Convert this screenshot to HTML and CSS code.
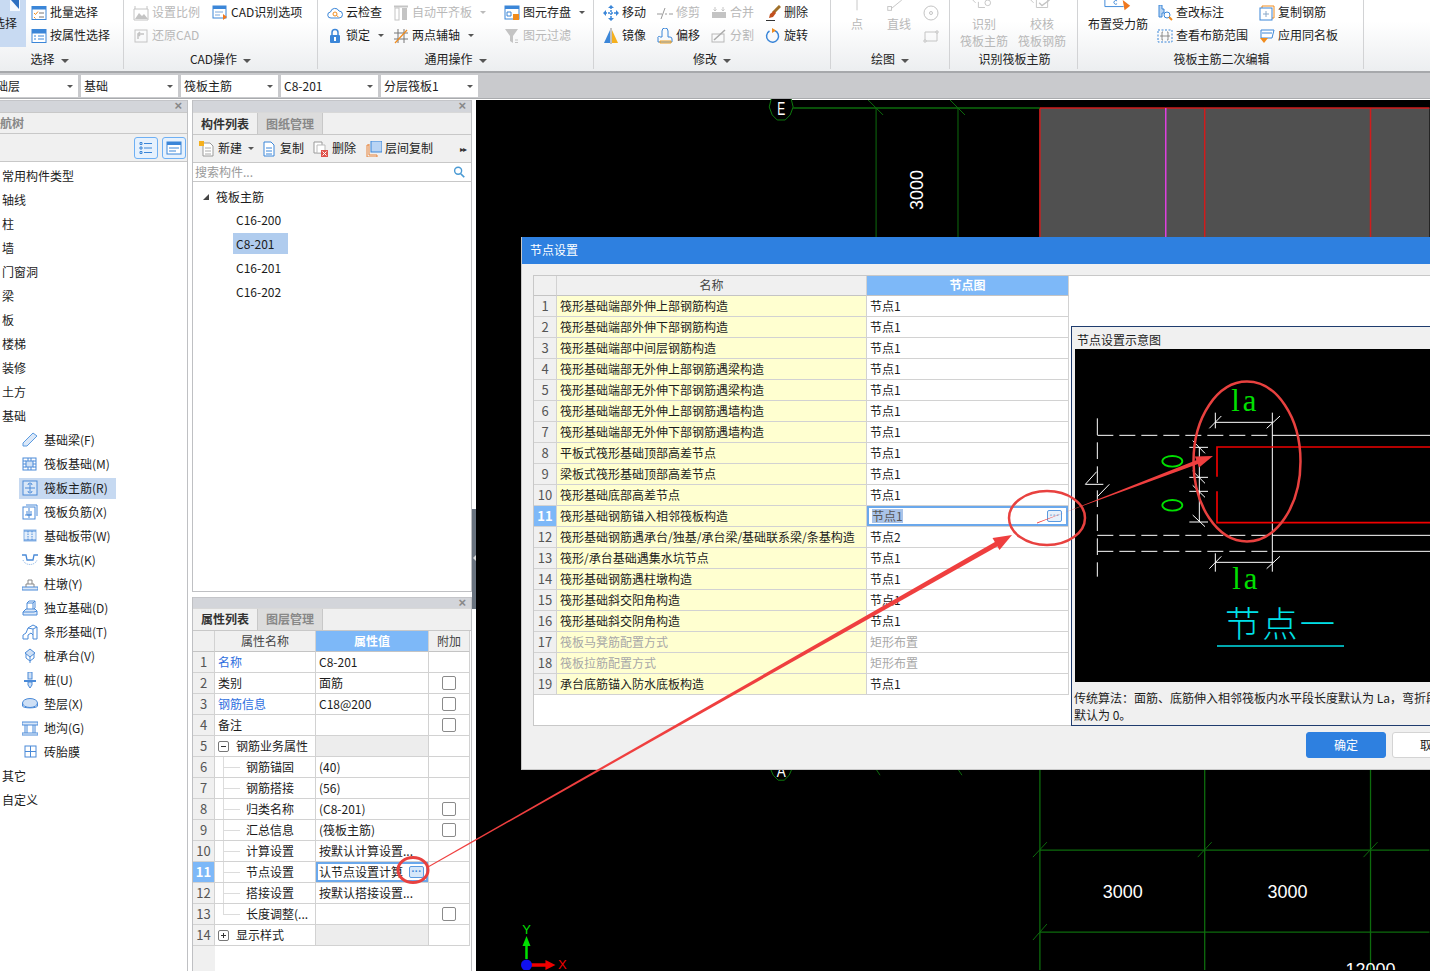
FILE: index.html
```html
<!DOCTYPE html>
<html lang="zh">
<head>
<meta charset="utf-8">
<title>节点设置</title>
<link rel="stylesheet" href="styles.css">
</head>
<body>
<svg class="defs" xmlns="http://www.w3.org/2000/svg">
  <symbol id="r-batch" viewBox="0 0 16 16"><rect x="1" y="1.5" width="14" height="13" fill="#fff" stroke="#3b86d8"/><rect x="1" y="1.5" width="14" height="3" fill="#3b86d8"/><path d="M3 8l1.5 1.5L7 6.5M3 12l1.5 1.5" fill="none" stroke="#f08c1e"/><path d="M8 8h5M8 12h5" stroke="#777"/></symbol>
  <symbol id="r-attr" viewBox="0 0 16 16"><rect x="1" y="1.5" width="14" height="13" fill="#fff" stroke="#3b86d8"/><rect x="1" y="1.5" width="14" height="4" fill="#3b86d8"/><path d="M3 8h2M7 8h6M3 11h2M7 11h6" stroke="#3b86d8"/></symbol>
  <symbol id="r-scale" viewBox="0 0 16 16"><path d="M1 4h14v11H1z" fill="none" stroke="#c4c4c4"/><path d="M2 14l4-6 3 3 2-2 4 5z" fill="#c4c4c4"/><path d="M2 1v3M14 1v3" stroke="#c4c4c4"/></symbol>
  <symbol id="r-cad" viewBox="0 0 16 16"><rect x="1" y="1" width="13" height="12" fill="#fff" stroke="#3b86d8"/><rect x="1" y="1" width="13" height="3" fill="#3b86d8"/><path d="M3 7h8M3 10h5" stroke="#7aa8dc"/><path d="M11 9l4 3-4 3z" fill="#f0781e"/></symbol>
  <symbol id="r-restore" viewBox="0 0 16 16"><rect x="2" y="2" width="12" height="12" fill="none" stroke="#c4c4c4"/><path d="M5 11V6h6M7 4L5 6l2 2" fill="none" stroke="#c4c4c4" stroke-width="1.5"/></symbol>
  <symbol id="r-cloud" viewBox="0 0 16 16"><path d="M4 13a3 3 0 0 1-.5-6A4.5 4.5 0 0 1 12 6a3.5 3.5 0 0 1 0 7z" fill="#fff" stroke="#3b86d8"/><circle cx="8" cy="9" r="2" fill="none" stroke="#f08c1e"/><path d="M9.5 10.5l2 1.5" stroke="#f08c1e"/></symbol>
  <symbol id="r-lock" viewBox="0 0 16 16"><path d="M5 7V4.5a3 3 0 0 1 6 0V7" fill="none" stroke="#3b86d8" stroke-width="1.5"/><rect x="3" y="7" width="10" height="8" rx="1" fill="#3b86d8"/><rect x="7" y="9" width="2" height="4" fill="#fff"/></symbol>
  <symbol id="r-align" viewBox="0 0 16 16"><path d="M1 1.500h14" stroke="#c4c4c4" stroke-width="2"/><rect x="2" y="3" width="4" height="12" fill="none" stroke="#c4c4c4"/><rect x="9" y="3" width="5" height="12" fill="#c4c4c4"/></symbol>
  <symbol id="r-axis" viewBox="0 0 16 16"><path d="M1 5h14M1 11h14M5 1v14M11 1v14" stroke="#777"/><path d="M2 15L14 2" stroke="#f08c1e" stroke-width="1.2"/></symbol>
  <symbol id="r-save" viewBox="0 0 16 16"><rect x="1" y="1" width="14" height="13" fill="#fff" stroke="#3b86d8"/><rect x="1" y="1" width="14" height="3" fill="#3b86d8"/><path d="M3 7h4v4H3z" fill="none" stroke="#3b86d8"/><rect x="9" y="9" width="6" height="6" fill="#f08c1e"/></symbol>
  <symbol id="r-filter" viewBox="0 0 16 16"><path d="M1 1h13L9 8v7L6 13V8z" fill="#c4c4c4"/><path d="M11 12h3M11 14.500h3" stroke="#c4c4c4"/></symbol>
  <symbol id="r-move" viewBox="0 0 16 16"><path d="M8 2v12M2 8h12" stroke="#3b86d8" stroke-width="1.5" stroke-dasharray="2 1"/><path d="M8 0l3 3H5zM8 16l-3-3h6zM0 8l3-3v6zM16 8l-3 3V5z" fill="#3b86d8"/></symbol>
  <symbol id="r-trim" viewBox="0 0 16 16"><path d="M0 9h5M8 9h2M12 9h4" stroke="#999"/><path d="M4 14L8 3" stroke="#999"/></symbol>
  <symbol id="r-merge" viewBox="0 0 16 16"><rect x="1" y="7" width="14" height="6" fill="#c4c4c4"/><path d="M4 2v4M2.500 4.500L4 6l1.500-1.500M12 2v4M10.500 4.500L12 6l1.500-1.500" fill="none" stroke="#c4c4c4"/></symbol>
  <symbol id="r-del" viewBox="0 0 16 16"><path d="M15 1L8 8" stroke="#a0702a" stroke-width="3"/><path d="M9 6l2 2-3 4-4 1 1-4z" fill="#c2501e"/><path d="M1 15.500h9" stroke="#333"/></symbol>
  <symbol id="r-mirror" viewBox="0 0 16 16"><path d="M7 2v13H1z" fill="#3b86d8"/><path d="M9 2v13h6z" fill="#f5b01e"/><path d="M8 0v16" stroke="#888"/></symbol>
  <symbol id="r-offset" viewBox="0 0 16 16"><path d="M1 14v-4a1 1 0 0 1 2-1h2V3a2 2 0 0 1 6 0v6h2a2 2 0 0 1 2 2v3z" fill="none" stroke="#3b86d8"/><path d="M3 15h11v-2H3z" fill="none" stroke="#f0a01e"/></symbol>
  <symbol id="r-split" viewBox="0 0 16 16"><rect x="1" y="6" width="12" height="8" fill="none" stroke="#b8b8b8"/><path d="M3 12L14 2" stroke="#aaa" stroke-width="1.500"/></symbol>
  <symbol id="r-rotate" viewBox="0 0 16 16"><path d="M4.500 3a6 6 0 1 0 5-.500" fill="none" stroke="#3b86d8" stroke-width="1.500"/><path d="M7 0l4 2.500L7 5z" fill="#f08c1e"/></symbol>
  <symbol id="r-circle" viewBox="0 0 16 16"><circle cx="8" cy="8" r="7" fill="none" stroke="#c4c4c4"/><circle cx="8" cy="8" r="1.500" fill="none" stroke="#c4c4c4"/></symbol>
  <symbol id="r-rect" viewBox="0 0 16 16"><path d="M2 4h12v9H2z" fill="none" stroke="#c4c4c4"/><path d="M1 12h2v2H1zM13 3h2v2h-2z" fill="#fff" stroke="#c4c4c4"/></symbol>
  <symbol id="r-point" viewBox="0 0 30 16"><path d="M15 0v11" stroke="#c4c4c4"/></symbol>
  <symbol id="r-line" viewBox="0 0 30 16"><path d="M7 9l11-9" stroke="#c4c4c4"/><rect x="3" y="7" width="4" height="4" fill="none" stroke="#c4c4c4"/></symbol>
  <symbol id="r-rec1" viewBox="0 0 30 16"><path d="M9 2v6h7" fill="none" stroke="#c4c4c4"/><circle cx="19" cy="3" r="3" fill="none" stroke="#c4c4c4"/><path d="M3 0l3 3" stroke="#c4c4c4"/></symbol>
  <symbol id="r-rec2" viewBox="0 0 30 16"><path d="M9 0v8h12V0" fill="none" stroke="#c4c4c4"/><path d="M12 3l3 3 8-6" fill="none" stroke="#c4c4c4" stroke-width="1.500"/><path d="M3 0l3 3" stroke="#c4c4c4"/></symbol>
  <symbol id="r-place" viewBox="0 0 30 16"><path d="M1 0v7h20" fill="none" stroke="#3b86d8"/><path d="M14 1a2 2 0 1 0 0 3" fill="none" stroke="#3b86d8"/><path d="M20 0l8 6-6 5z" fill="#f0781e"/></symbol>
  <symbol id="r-check" viewBox="0 0 16 16"><path d="M2 0h3v4h2v4H5v4H2z" fill="#bcd6f2" stroke="#3b86d8"/><circle cx="10" cy="10" r="3" fill="#fff" stroke="#3b86d8"/><path d="M12 12l3 3" stroke="#f08c1e" stroke-width="2"/></symbol>
  <symbol id="r-range" viewBox="0 0 16 16"><rect x="1" y="2" width="14" height="12" fill="none" stroke="#3b86d8" stroke-dasharray="2 1.500"/><path d="M6 4H5v8h1M10 4h1v8h-1M3 8h10" fill="none" stroke="#777" stroke-width=".8"/></symbol>
  <symbol id="r-copy" viewBox="0 0 16 16"><path d="M3 3V1h12v12h-2" fill="none" stroke="#f08c1e"/><rect x="1" y="3" width="12" height="12" fill="#fff" stroke="#3b86d8"/><path d="M4 9h6M7 6v6" stroke="#8aa8c8"/></symbol>
  <symbol id="r-same" viewBox="0 0 16 16"><path d="M2 2h13l-2 8H2z" fill="#fff" stroke="#3b86d8"/><path d="M1 10h8l-4 5z" fill="#f08c1e"/><path d="M3 5h10" stroke="#3b86d8"/></symbol>

  <symbol id="t-new" viewBox="0 0 16 16"><path d="M4 2h7l3 3v10H4z" fill="#fff" stroke="#999"/><path d="M6 7h6M6 10h6M6 13h6" stroke="#aaa"/><rect x="0" y="0" width="5" height="5" fill="#f5b01e"/></symbol>
  <symbol id="t-copy" viewBox="0 0 16 16"><path d="M3 1h7l3 3v11H3z" fill="#fff" stroke="#3b86d8"/><path d="M5 7h6M5 10h6M5 13h6" stroke="#3b86d8"/></symbol>
  <symbol id="t-del" viewBox="0 0 16 16"><path d="M1 1h8v11H1z" fill="#fff" stroke="#999"/><path d="M4 4h8v8H4z" fill="#fff" stroke="#bbb"/><rect x="8" y="9" width="7" height="7" fill="#e0524a"/><path d="M9.500 10.500l4 4M13.500 10.500l-4 4" stroke="#fff"/></symbol>
  <symbol id="t-floor" viewBox="0 0 16 16"><rect x="5" y="0" width="11" height="11" fill="#b8d4f4" stroke="#3b86d8"/><path d="M3 4H1v12h10v-2M3 3v11h8" fill="none" stroke="#e8843a"/></symbol>
  <symbol id="t-search" viewBox="0 0 16 16"><circle cx="7" cy="6.500" r="4" fill="none" stroke="#4a9ad4" stroke-width="1.600"/><path d="M10 10l4 4" stroke="#4a9ad4" stroke-width="2"/></symbol>
  <symbol id="t-list" viewBox="0 0 16 16"><path d="M2 2.500h2v2H2zM2 7h2v2H2zM2 11.500h2v2H2z" fill="none" stroke="#3b86d8"/><path d="M6 3.500h8M6 8h8M6 12.500h8" stroke="#3b86d8"/></symbol>
  <symbol id="t-win" viewBox="0 0 16 16"><rect x="1" y="2" width="14" height="12" fill="#fff" stroke="#3b86d8"/><rect x="1" y="2" width="14" height="3" fill="#3b86d8"/><path d="M3 8h10M3 11h7" stroke="#3b86d8"/></symbol>

  <symbol id="n-beam" viewBox="0 0 16 16"><path d="M1 11L11 1l4 3L5 14H1z" fill="#dbe8f8" stroke="#5a9ae0"/></symbol>
  <symbol id="n-raft" viewBox="0 0 16 16"><rect x="1" y="2" width="13" height="12" fill="#fff" stroke="#4a8ad8"/><rect x="4" y="5" width="7" height="6" fill="#cfe0f5" stroke="#4a8ad8"/><path d="M1 5h3M1 8h3M1 11h3M11 5h3M11 8h3M11 11h3M6 2v3M9 2v3M6 11v3M9 11v3" stroke="#4a8ad8"/></symbol>
  <symbol id="n-main" viewBox="0 0 16 16"><rect x="1" y="1" width="14" height="14" fill="#d8e6f7" stroke="#4a8ad8"/><path d="M3 8h10M8 4v8" stroke="#4a8ad8"/><path d="M6 5a2 2 0 0 1 4 0M6 11a2 2 0 0 0 4 0" fill="none" stroke="#4a8ad8"/></symbol>
  <symbol id="n-neg" viewBox="0 0 16 16"><path d="M4 1h11v11" fill="none" stroke="#4a8ad8"/><rect x="1" y="3" width="12" height="12" fill="#fff" stroke="#4a8ad8"/><path d="M7 4v10M5 7v4h4V7M3 11h7" fill="none" stroke="#4a8ad8"/></symbol>
  <symbol id="n-band" viewBox="0 0 16 16"><rect x="2" y="2" width="12" height="11" fill="#e3eefb" stroke="#8ab4e6"/><path d="M2 3h12M2 12h12" stroke="#4a8ad8"/><path d="M6 3v9M10 3v9" stroke="#4a8ad8" stroke-dasharray="1.500 1"/></symbol>
  <symbol id="n-pit" viewBox="0 0 16 16"><path d="M0 3h4l1 5h6l1-5h4" fill="none" stroke="#4a8ad8" stroke-width="1.300"/><path d="M1 8c2 6 12 6 14 0" fill="none" stroke="#8ab4e6" stroke-dasharray="1 1"/></symbol>
  <symbol id="n-pier" viewBox="0 0 16 16"><path d="M0 11h16v3H0z" fill="#dbe8f8" stroke="#4a8ad8"/><path d="M4 11V8h8v3M6 8V4h4v4" fill="none" stroke="#888"/></symbol>
  <symbol id="n-ind" viewBox="0 0 16 16"><path d="M5 9V3l2-2h6v7l-2 2" fill="#fff" stroke="#4a8ad8"/><path d="M5 3h6v6M11 3l2-2" fill="none" stroke="#4a8ad8"/><path d="M1 15v-3l3-3h9l2 2v4z" fill="#dbe8f8" stroke="#4a8ad8"/><path d="M1 12h11l3-1" fill="none" stroke="#4a8ad8"/></symbol>
  <symbol id="n-strip" viewBox="0 0 16 16"><path d="M1 15v-4l3-2 2-5 5-3 4 2v12h-4v-4l-2-2-3 2v4z" fill="#fff" stroke="#4a8ad8"/><path d="M6 4l5 1 4-2M11 5v6" fill="none" stroke="#4a8ad8"/></symbol>
  <symbol id="n-cap" viewBox="0 0 16 16"><path d="M8 1l5 4-5 4-5-4z" fill="#cfe0f5" stroke="#4a8ad8"/><path d="M4 6v4l4 3 4-3V6M8 9v6" fill="none" stroke="#4a8ad8"/></symbol>
  <symbol id="n-pile" viewBox="0 0 16 16"><rect x="6" y="0" width="4" height="7" fill="#cfe0f5" stroke="#4a8ad8"/><path d="M2 8h12v2H2z" fill="#4a8ad8"/><path d="M6 10h4v3l-2 3-2-3z" fill="#cfe0f5" stroke="#4a8ad8"/></symbol>
  <symbol id="n-cush" viewBox="0 0 16 16"><ellipse cx="8" cy="7" rx="7.500" ry="4.500" fill="#cfe0f5" stroke="#4a8ad8"/><path d="M.5 7v3c0 2.500 15 2.500 15 0V7" fill="none" stroke="#4a8ad8"/></symbol>
  <symbol id="n-ditch" viewBox="0 0 16 16"><path d="M0 2h16v3H0z" fill="#dbe8f8" stroke="#4a8ad8"/><path d="M3 5v8M13 5v8M5 5v8M11 5v8" stroke="#4a8ad8"/><path d="M0 13h16v2H0z" fill="#fff" stroke="#4a8ad8"/></symbol>
  <symbol id="n-brick" viewBox="0 0 16 16"><rect x="3" y="2" width="11" height="11" fill="#fff" stroke="#4a8ad8"/><path d="M8.500 2v11M3 7.500h11" stroke="#4a8ad8"/></symbol>
</svg>

<header class="ribbon">
  <section class="grp g1">
    <div class="body">
      <div class="bigbtn"><svg class="bigbtn-mark" viewBox="0 0 10 11"><path d="M0 0h10v11H0z" fill="#f4f8fd"/><path d="M1 0l8 9V0z" fill="#2c6fc0"/></svg><span class="bigbtn-txt">选择</span></div>
      <div class="col">
        <div class="it"><svg class="ic"><use href="#r-batch"/></svg>批量选择</div>
        <div class="it"><svg class="ic"><use href="#r-attr"/></svg>按属性选择</div>
      </div>
    </div>
    <div class="lab">选择<i class="car"></i></div>
  </section>
  <section class="grp g2">
    <div class="body">
      <div class="col">
        <div class="it off"><svg class="ic"><use href="#r-scale"/></svg>设置比例</div>
        <div class="it off"><svg class="ic"><use href="#r-restore"/></svg>还原CAD</div>
      </div>
      <div class="col">
        <div class="it"><svg class="ic"><use href="#r-cad"/></svg>CAD识别选项</div>
      </div>
    </div>
    <div class="lab">CAD操作<i class="car"></i></div>
  </section>
  <section class="grp g3">
    <div class="body">
      <div class="col">
        <div class="it"><svg class="ic"><use href="#r-cloud"/></svg>云检查</div>
        <div class="it"><svg class="ic"><use href="#r-lock"/></svg>锁定<i class="car sm"></i></div>
      </div>
      <div class="col">
        <div class="it off"><svg class="ic"><use href="#r-align"/></svg>自动平齐板<i class="car sm dim"></i></div>
        <div class="it"><svg class="ic"><use href="#r-axis"/></svg>两点辅轴<i class="car sm"></i></div>
      </div>
      <div class="col">
        <div class="it"><svg class="ic"><use href="#r-save"/></svg>图元存盘<i class="car sm"></i></div>
        <div class="it off"><svg class="ic"><use href="#r-filter"/></svg>图元过滤</div>
      </div>
    </div>
    <div class="lab">通用操作<i class="car"></i></div>
  </section>
  <section class="grp g4">
    <div class="body">
      <div class="col">
        <div class="it"><svg class="ic"><use href="#r-move"/></svg>移动</div>
        <div class="it"><svg class="ic"><use href="#r-mirror"/></svg>镜像</div>
      </div>
      <div class="col">
        <div class="it off"><svg class="ic"><use href="#r-trim"/></svg>修剪</div>
        <div class="it"><svg class="ic"><use href="#r-offset"/></svg>偏移</div>
      </div>
      <div class="col">
        <div class="it off"><svg class="ic"><use href="#r-merge"/></svg>合并</div>
        <div class="it off"><svg class="ic"><use href="#r-split"/></svg>分割</div>
      </div>
      <div class="col">
        <div class="it"><svg class="ic"><use href="#r-del"/></svg>删除</div>
        <div class="it"><svg class="ic"><use href="#r-rotate"/></svg>旋转</div>
      </div>
    </div>
    <div class="lab">修改<i class="car"></i></div>
  </section>
  <section class="grp g5">
    <div class="body">
      <div class="big off"><svg class="icw"><use href="#r-point"/></svg><span>点</span></div>
      <div class="big off"><svg class="icw"><use href="#r-line"/></svg><span>直线</span></div>
      <div class="col">
        <div class="it"><svg class="ic"><use href="#r-circle"/></svg></div>
        <div class="it"><svg class="ic"><use href="#r-rect"/></svg></div>
      </div>
    </div>
    <div class="lab">绘图<i class="car"></i></div>
  </section>
  <section class="grp g6">
    <div class="body">
      <div class="big off"><svg class="icw"><use href="#r-rec1"/></svg><span>识别</span><span>筏板主筋</span></div>
      <div class="big off"><svg class="icw"><use href="#r-rec2"/></svg><span>校核</span><span>筏板钢筋</span></div>
    </div>
    <div class="lab">识别筏板主筋</div>
  </section>
  <section class="grp g7">
    <div class="body">
      <div class="big"><svg class="icw"><use href="#r-place"/></svg><span>布置受力筋</span></div>
      <div class="col">
        <div class="it"><svg class="ic"><use href="#r-check"/></svg>查改标注</div>
        <div class="it"><svg class="ic"><use href="#r-range"/></svg>查看布筋范围</div>
      </div>
      <div class="col">
        <div class="it"><svg class="ic"><use href="#r-copy"/></svg>复制钢筋</div>
        <div class="it"><svg class="ic"><use href="#r-same"/></svg>应用同名板</div>
      </div>
    </div>
    <div class="lab">筏板主筋二次编辑</div>
  </section>
</header>

<div class="combobar">
  <div class="combo first"><span class="clipped">基础层</span><i class="car sm"></i></div>
  <div class="combo"><span>基础</span><i class="car sm"></i></div>
  <div class="combo"><span>筏板主筋</span><i class="car sm"></i></div>
  <div class="combo"><span>C8-201</span><i class="car sm"></i></div>
  <div class="combo"><span>分层筏板1</span><i class="car sm"></i></div>
</div>

<main class="main">
  <aside class="nav">
    <div class="strip"><span class="x">×</span></div>
    <div class="navhead">航树</div>
    <div class="navtool">
      <span class="tbtn"><svg class="ic"><use href="#t-list"/></svg></span>
      <span class="tbtn"><svg class="ic"><use href="#t-win"/></svg></span>
    </div>
    <div class="tree">
      <div class="nr">常用构件类型</div>
      <div class="nr">轴线</div>
      <div class="nr">柱</div>
      <div class="nr">墙</div>
      <div class="nr">门窗洞</div>
      <div class="nr">梁</div>
      <div class="nr">板</div>
      <div class="nr">楼梯</div>
      <div class="nr">装修</div>
      <div class="nr">土方</div>
      <div class="nr">基础</div>
      <div class="nc"><svg class="ic"><use href="#n-beam"/></svg>基础梁(F)</div>
      <div class="nc"><svg class="ic"><use href="#n-raft"/></svg>筏板基础(M)</div>
      <div class="nc sel"><svg class="ic"><use href="#n-main"/></svg>筏板主筋(R)</div>
      <div class="nc"><svg class="ic"><use href="#n-neg"/></svg>筏板负筋(X)</div>
      <div class="nc"><svg class="ic"><use href="#n-band"/></svg>基础板带(W)</div>
      <div class="nc"><svg class="ic"><use href="#n-pit"/></svg>集水坑(K)</div>
      <div class="nc"><svg class="ic"><use href="#n-pier"/></svg>柱墩(Y)</div>
      <div class="nc"><svg class="ic"><use href="#n-ind"/></svg>独立基础(D)</div>
      <div class="nc"><svg class="ic"><use href="#n-strip"/></svg>条形基础(T)</div>
      <div class="nc"><svg class="ic"><use href="#n-cap"/></svg>桩承台(V)</div>
      <div class="nc"><svg class="ic"><use href="#n-pile"/></svg>桩(U)</div>
      <div class="nc"><svg class="ic"><use href="#n-cush"/></svg>垫层(X)</div>
      <div class="nc"><svg class="ic"><use href="#n-ditch"/></svg>地沟(G)</div>
      <div class="nc"><svg class="ic"><use href="#n-brick"/></svg>砖胎膜</div>
      <div class="nr">其它</div>
      <div class="nr">自定义</div>
    </div>
  </aside>

  <div class="midcol">
    <section class="panel top">
      <div class="strip"><span class="x">×</span></div>
      <div class="tabs"><span class="tab on">构件列表</span><span class="tab">图纸管理</span></div>
      <div class="listtool">
        <span class="lt t1"><svg class="ic"><use href="#t-new"/></svg>新建<i class="car sm"></i></span>
        <span class="lt t2"><svg class="ic"><use href="#t-copy"/></svg>复制</span>
        <span class="lt t3"><svg class="ic"><use href="#t-del"/></svg>删除</span>
        <span class="lt t4"><svg class="ic"><use href="#t-floor"/></svg>层间复制</span>
        <span class="more">▸▸</span>
      </div>
      <div class="search"><span>搜索构件...</span><svg class="ic"><use href="#t-search"/></svg></div>
      <div class="list">
        <div class="lr root"><i class="tri"></i>筏板主筋</div>
        <div class="lr leaf"><span>C16-200</span></div>
        <div class="lr leaf"><span class="picked">C8-201</span></div>
        <div class="lr leaf"><span>C16-201</span></div>
        <div class="lr leaf"><span>C16-202</span></div>
      </div>
    </section>

    <section class="panel bottom">
      <div class="strip short"><span class="x">×</span></div>
      <div class="tabs"><span class="tab on">属性列表</span><span class="tab">图层管理</span></div>
      <div class="propwrap">
        <table class="grid prop">
          <colgroup><col class="pc0"><col class="pc1"><col class="pc2"><col class="pc3"></colgroup>
          <thead><tr><th></th><th>属性名称</th><th class="hot">属性值</th><th>附加</th></tr></thead>
          <tbody>
            <tr><td class="no">1</td><td class="link">名称</td><td>C8-201</td><td></td></tr>
            <tr><td class="no">2</td><td>类别</td><td>面筋</td><td class="cc"><i class="chk"></i></td></tr>
            <tr><td class="no">3</td><td class="link">钢筋信息</td><td>C18@200</td><td class="cc"><i class="chk"></i></td></tr>
            <tr><td class="no">4</td><td>备注</td><td></td><td class="cc"><i class="chk"></i></td></tr>
            <tr><td class="no">5</td><td><i class="box"></i>钢筋业务属性</td><td class="shade"></td><td></td></tr>
            <tr><td class="no">6</td><td class="sub">钢筋锚固</td><td>(40)</td><td></td></tr>
            <tr><td class="no">7</td><td class="sub">钢筋搭接</td><td>(56)</td><td></td></tr>
            <tr><td class="no">8</td><td class="sub">归类名称</td><td>(C8-201)</td><td class="cc"><i class="chk"></i></td></tr>
            <tr><td class="no">9</td><td class="sub">汇总信息</td><td>(筏板主筋)</td><td class="cc"><i class="chk"></i></td></tr>
            <tr><td class="no">10</td><td class="sub">计算设置</td><td>按默认计算设置...</td><td></td></tr>
            <tr><td class="no cur">11</td><td class="sub">节点设置</td><td class="edit"><span class="edit-in"><span class="edit-t">认节点设置计算</span><i class="dots">···</i></span></td><td></td></tr>
            <tr><td class="no">12</td><td class="sub">搭接设置</td><td>按默认搭接设置...</td><td></td></tr>
            <tr><td class="no">13</td><td class="sub last">长度调整(...</td><td></td><td class="cc"><i class="chk"></i></td></tr>
            <tr><td class="no">14</td><td><i class="box plus"></i>显示样式</td><td class="shade"></td><td></td></tr>
          </tbody>
        </table>
      </div>
    </section>
  </div>

  <div class="splitter"><span class="handle"></span></div>

  <div class="canvas">
    <svg class="cad" viewBox="476 99 954 872">
      <rect x="1040" y="108" width="390" height="135" fill="#505050"/>
      <path d="M1040 108h390M1040 108v135M1205 108v135M1371 108v135" stroke="#d01c1c" stroke-width="1.500" fill="none"/>
      <path d="M1166 108v135" stroke="#e040e0" stroke-width="1.500"/>
      <path d="M876 108v135M958 108v135M868 100l15 15M950 100l15 15" stroke="#0d6b0d" stroke-width="1" fill="none"/>
      <path d="M793 108h247" stroke="#0d6b0d" stroke-width="1.500"/>
      <path d="M771 99l-2 8 3 8 5 5h8l5-5 3-8-2-8" fill="#000" stroke="#0d7a0d"/>
      <text x="781" y="115" class="cad-t e" textLength="8" lengthAdjust="spacingAndGlyphs">E</text>
      <text x="917" y="190" class="cad-t n3" transform="rotate(-90 917 190)" dy="6">3000</text>
      <path d="M770 769l3 7 5 5h6l5-5 3-7" fill="#000" stroke="#0d7a0d"/>
      <text x="781" y="778" class="cad-t ea" textLength="9" lengthAdjust="spacingAndGlyphs">A</text>
      <path d="M876 770l4 6M958 770l4 6" stroke="#0d6b0d"/>
      <path d="M1040 769v202M1205 769v202M1371 769v202M1040 851h390M1040 933h390" stroke="#0d6b0d" stroke-width="1.300"/>
      <path d="M1033 858l14-15M1198 858l14-15M1364 858l14-15M1033 941l14-16" stroke="#0d6b0d"/>
      <text x="1123" y="899" class="cad-t n3">3000</text>
      <text x="1288" y="899" class="cad-t n3">3000</text>
      <text x="1346" y="977" class="cad-t n4">12000</text>
      <path d="M526 960v-18" stroke="#00e000" stroke-width="2.500"/>
      <path d="M526 937l-4 10h8z" fill="#00e000"/>
      <path d="M526 966h20" stroke="#f00000" stroke-width="3.500"/>
      <path d="M555 966l-10-5v10z" fill="#f00000"/>
      <circle cx="526" cy="966" r="5.500" fill="#1010f0"/>
      <text x="526" y="935" class="cad-t ax gy">Y</text>
      <text x="562" y="970" class="cad-t ax rx">X</text>
    </svg>
  </div>
</main>

<div class="dialog">
  <div class="dtitle">节点设置</div>
  <div class="dbody">
    <div class="dgrid">
      <table class="grid node">
        <colgroup><col class="nc0"><col class="nc1"><col class="nc2"></colgroup>
        <thead><tr><th></th><th>名称</th><th class="hot">节点图</th></tr></thead>
        <tbody>
          <tr><td class="no">1</td><td class="ye">筏形基础端部外伸上部钢筋构造</td><td>节点1</td></tr>
          <tr><td class="no">2</td><td class="ye">筏形基础端部外伸下部钢筋构造</td><td>节点1</td></tr>
          <tr><td class="no">3</td><td class="ye">筏形基础端部中间层钢筋构造</td><td>节点1</td></tr>
          <tr><td class="no">4</td><td class="ye">筏形基础端部无外伸上部钢筋遇梁构造</td><td>节点1</td></tr>
          <tr><td class="no">5</td><td class="ye">筏形基础端部无外伸下部钢筋遇梁构造</td><td>节点1</td></tr>
          <tr><td class="no">6</td><td class="ye">筏形基础端部无外伸上部钢筋遇墙构造</td><td>节点1</td></tr>
          <tr><td class="no">7</td><td class="ye">筏形基础端部无外伸下部钢筋遇墙构造</td><td>节点1</td></tr>
          <tr><td class="no">8</td><td class="ye">平板式筏形基础顶部高差节点</td><td>节点1</td></tr>
          <tr><td class="no">9</td><td class="ye">梁板式筏形基础顶部高差节点</td><td>节点1</td></tr>
          <tr><td class="no">10</td><td class="ye">筏形基础底部高差节点</td><td>节点1</td></tr>
          <tr><td class="no cur">11</td><td class="ye">筏形基础钢筋锚入相邻筏板构造</td><td class="edit"><span class="edit-in"><span class="edit-t"><mark>节点1</mark></span><i class="dots pale">···</i></span></td></tr>
          <tr><td class="no">12</td><td class="ye">筏形基础钢筋遇承台/独基/承台梁/基础联系梁/条基构造</td><td>节点2</td></tr>
          <tr><td class="no">13</td><td class="ye">筏形/承台基础遇集水坑节点</td><td>节点1</td></tr>
          <tr><td class="no">14</td><td class="ye">筏形基础钢筋遇柱墩构造</td><td>节点1</td></tr>
          <tr><td class="no">15</td><td class="ye">筏形基础斜交阳角构造</td><td>节点1</td></tr>
          <tr><td class="no">16</td><td class="ye">筏形基础斜交阴角构造</td><td>节点1</td></tr>
          <tr class="dis"><td class="no">17</td><td class="ye">筏板马凳筋配置方式</td><td>矩形布置</td></tr>
          <tr class="dis"><td class="no">18</td><td class="ye">筏板拉筋配置方式</td><td>矩形布置</td></tr>
          <tr><td class="no">19</td><td class="ye">承台底筋锚入防水底板构造</td><td>节点1</td></tr>
        </tbody>
      </table>
      <div class="preview">
        <div class="ptitle">节点设置示意图</div>
        <svg class="pimg" viewBox="15 87 1176 999">
          <g fill="none" stroke="#fff" stroke-width="3">
            <path d="M82 295v475" stroke-dasharray="50 22"/>
            <path d="M82 346H607M82 646H607M82 694H607" stroke-dasharray="48 18"/>
            <path d="M607 346H1191M607 646H1191M607 694H1191M607 278V755M436 278v47M436 700v55"/>
            <path d="M436 307H607M436 727H607M388 382V606M358 382h56M358 472h56M358 514h56M358 606h56"/>
            <path d="M418 325l36-37M590 325l40-37M418 746l36-37M590 746l40-37M368 362l37 38M368 453l37 37M368 496l37 36M368 585l37 35"/>
            <path d="M46 493l34-38M46 493h54M82 530l36-37"/>
          </g>
          <g fill="none" stroke="#00e000" stroke-width="5.500">
            <ellipse cx="307" cy="424" rx="30" ry="16"/>
            <ellipse cx="307" cy="556" rx="30" ry="16"/>
          </g>
          <path d="M1191 381H441v89M441 514v94H1191" fill="none" stroke="#f00000" stroke-width="5"/>
          <text x="484" y="272" class="la">la</text>
          <text x="487" y="808" class="la">la</text>
          <text x="465" y="951" class="nodename">节点一</text>
          <path d="M441 978H822" stroke="#00e0e8" stroke-width="5"/>
        </svg>
        <p class="pdesc">传统算法：面筋、底筋伸入相邻筏板内水平段长度默认为 La，弯折段长度<br>默认为 0。</p>
      </div>
    </div>
    <div class="dfoot">
      <span class="btn ok">确定</span>
      <span class="btn">取消</span>
    </div>
  </div>
</div>

<svg class="marks" viewBox="0 0 1430 971">
  <g fill="none" stroke="#e8413f" stroke-width="2.500">
    <ellipse cx="1247" cy="461.500" rx="53.500" ry="80"/>
    <ellipse cx="1047" cy="518" rx="38" ry="27"/>
    <ellipse cx="413" cy="870" rx="15" ry="12.500" stroke-width="3"/>
  </g>
  <g fill="#ef3f3f">
    <polygon points="428.200,867.400 427.800,866.600 998.800,539.800 1001.200,544.200"/>
    <polygon points="1012,535 992.500,538 999.500,550"/>
    <polygon points="1037,522.600 1037,523.400 1199.300,459.100 1200.700,462.900"/>
    <polygon points="1213,456 1194.900,456.400 1199.100,467.600"/>
  </g>
</svg>
</body>
</html>
```

FILE: styles.css
```css
* { box-sizing: border-box; }
html, body { margin: 0; padding: 0; }
body {
  position: relative;
  width: 1430px;
  height: 971px;
  overflow: hidden;
  background: #fff;
  color: #1c1c1c;
  font: 12px/1.2 "Noto Sans CJK SC", "Noto Sans", sans-serif;
}
.defs { position: absolute; width: 0; height: 0; }
.ic { width: 16px; height: 16px; flex: none; display: block; }
.icw { width: 30px; height: 15px; flex: none; display: block; }
i { font-style: normal; }

/* carets */
.car {
  display: inline-block;
  width: 0; height: 0;
  margin-left: 6px;
  border: 4px solid transparent;
  border-top: 4px solid #555;
  border-bottom: 0;
  vertical-align: middle;
}
.car.sm { border-width: 3px 3px 0; border-top-color: #555; }
.car.dim { border-top-color: #bbb; }

/* ribbon */
.ribbon {
  display: flex;
  height: 73px;
  background: linear-gradient(#fff 30%, #eceef0);
  border-bottom: 2px solid #a6a8ab;
}
.grp { display: flex; flex-direction: column; height: 69px; border-right: 1px solid #d2d3d5; }
.body { display: flex; height: 47px; flex: none; }
.lab { height: 21px; padding-top: 3px; text-align: center; color: #222; line-height: 18px; white-space: nowrap; }
.col { display: flex; flex-direction: column; padding-top: 1px; flex: none; }
.it { display: flex; align-items: center; gap: 3px; height: 23px; white-space: nowrap; }
.it .car { margin-left: 5px; }
.off { color: #b8b8b8; }
.big { display: flex; flex-direction: column; align-items: center; flex: none; line-height: 17px; white-space: nowrap; }

.g1 { width: 124px; }
.g1 .lab { padding-right: 24px; }
.g2 { width: 194px; }
.g3 { width: 276px; }
.g4 { width: 237px; }
.g5 { width: 119px; }
.g6 { width: 128px; }
.g7 { width: 286px; }
.g6 .lab, .g7 .lab { padding-left: 2px; }
.g1 .col { margin-left: 5px; }
.g2 .body { padding-left: 9px; }
.g2 .col:first-child { width: 79px; }
.g3 .body { padding-left: 9px; }
.g3 .col:nth-child(1) { width: 66px; }
.g3 .col:nth-child(2) { width: 111px; }
.g4 .body { padding-left: 9px; }
.g4 .col { width: 54px; }
.g5 .body { padding-left: 19px; }
.g5 .big { width: 14px; }
.g5 .big + .big { width: 24px; margin-left: 23px; }
.g5 .col { margin-left: 12px; }
.g6 .body { padding-left: 10px; }
.g6 .big { width: 48px; }
.g6 .big + .big { margin-left: 10px; }
.g7 .body { padding-left: 10px; }
.g7 .big { width: 60px; }
.g7 .col:nth-child(2) { width: 102px; margin-left: 9px; }
.bigbtn {
  position: relative;
  width: 26px; height: 47px;
  background: #c8daf2;
  overflow: hidden;
  flex: none;
}
.bigbtn-mark { position: absolute; left: 10px; top: 0; width: 10px; height: 11px; }
.bigbtn-txt { position: absolute; left: -7px; top: 16px; white-space: nowrap; }

/* combo row */
.combobar {
  display: flex;
  gap: 3px;
  height: 26px;
  padding: 2px 0 1px;
  background: #c9cacd;
  border-bottom: 1px solid #a9abae;
}
.combo {
  display: flex;
  align-items: center;
  justify-content: space-between;
  width: 97px;
  padding: 0 5px 0 3px;
  background: #fff;
  overflow: hidden;
}
.combo.first { width: 78px; padding-left: 0; }
.clipped { margin-left: -16px; }

/* main */
.main { display: flex; height: 872px; padding-top: 1px; }
.strip {
  position: relative;
  height: 12px;
  background: #d3d5da;
  border-top: 1px solid #c4c5c9;
}
.strip.short { height: 11px; }
.x { position: absolute; right: 5px; top: -3px; color: #888; font: bold 13px/15px "Liberation Sans", sans-serif; }

.nav { width: 188px; border-right: 1px solid #bfc0c3; flex: none; }
.navhead {
  height: 22px;
  padding-top: 3px;
  background: #f0f0f0;
  border-top: 1px solid #c8c8c8;
  border-bottom: 1px solid #c8c8c8;
  color: #888;
  font-weight: bold;
}
.navtool {
  display: flex;
  justify-content: flex-end;
  align-items: center;
  gap: 4px;
  height: 28px;
  padding-right: 1px;
  background: #f0f0f0;
  border-bottom: 1px solid #c8c8c8;
}
.tbtn {
  display: flex;
  justify-content: center;
  align-items: center;
  width: 24px; height: 22px;
  background: #e6f1fd;
  border: 1px solid #6eb0f4;
  border-radius: 3px;
}
.tree { padding-top: 2px; }
.nr { height: 24px; line-height: 24px; padding-left: 2px; }
.nc {
  display: flex;
  align-items: center;
  gap: 6px;
  width: 97px;
  height: 24px;
  margin-left: 19px;
  padding-left: 3px;
  white-space: nowrap;
}
.nc.sel { background: linear-gradient(#c6d9f1, #c6d9f1) 0 50% / 100% 21px no-repeat; }

.midcol { display: flex; flex-direction: column; gap: 5px; width: 280px; margin-left: 4px; flex: none; }
.panel { border: 1px solid #bfc0c3; border-top: 0; }
.panel.top { height: 492px; }
.panel.bottom { height: 374px; border-bottom: 0; display: flex; flex-direction: column; }
.tabs { display: flex; height: 23px; background: #f0f0f0; border-bottom: 1px solid #c8c8c8; border-top: 1px solid #d8d8d8; }
.tab {
  width: 65px;
  line-height: 21px;
  text-align: center;
  font-weight: bold;
  color: #888;
  background: #dcdcdc;
  border-right: 1px solid #c8c8c8;
}
.tab.on { color: #333; background: #f0f0f0; }
.bottom .tab { line-height: 19px; }
.listtool {
  position: relative;
  display: flex;
  align-items: center;
  height: 28px;
  background: #f0f0f0;
  border-bottom: 1px solid #c8c8c8;
}
.lt { display: flex; align-items: center; gap: 3px; white-space: nowrap; }
.lt .car { margin-left: 3px; }
.t1 { margin-left: 6px; }
.t2 { margin-left: 7px; }
.t3 { margin-left: 9px; }
.t4 { margin-left: 10px; }
.more { margin-left: auto; margin-right: 5px; font-size: 8px; color: #333; letter-spacing: -1px; }
.search {
  display: flex;
  align-items: center;
  justify-content: space-between;
  height: 19px;
  padding: 0 5px 0 2px;
  color: #9a9a9a;
  border-bottom: 1px solid #c8c8c8;
}
.search .ic { width: 14px; height: 14px; }
.list { padding-top: 3px; }
.lr { height: 24px; line-height: 24px; }
.root { position: relative; padding-left: 23px; }
.tri {
  position: absolute; left: 10px; top: 9px;
  width: 0; height: 0;
  border-style: solid;
  border-width: 0 0 6px 6px;
  border-color: transparent transparent #444 transparent;
}
.leaf { padding-left: 40px; }
.leaf span { display: inline-block; width: 55px; height: 21px; line-height: 21px; vertical-align: top; padding-left: 3px; }
.leaf .picked { background: #b0ccee; }

.splitter { display: flex; align-items: flex-start; width: 4px; flex: none; }
.handle {
  position: relative;
  display: block;
  width: 4px; height: 100px;
  margin-top: 409px;
  background: #69737f;
}
.handle::after {
  content: "";
  position: absolute; left: 1px; top: 46px;
  border: 3px solid transparent;
  border-right-color: #ddd;
  border-left: 0;
}

.canvas { flex: 1; background: #000; }
.cad { display: block; width: 954px; height: 871px; margin-top: -1px; }
.cad-t { fill: #fff; font-family: "Liberation Sans", sans-serif; text-anchor: middle; }
.e { font-size: 19px; }
.ea { font-size: 16px; }
.n3 { font-size: 18px; }
.n4 { font-size: 18px; text-anchor: start; }
.ax { font-size: 13px; }
.gy { fill: #00e000; }
.rx { fill: #f00000; }

/* grids */
.grid { border-collapse: separate; border-spacing: 0; table-layout: fixed; }
.grid th, .grid td {
  height: 21px;
  padding: 0 3px;
  border-right: 1px solid #d2d2d2;
  border-bottom: 1px solid #d2d2d2;
  font-weight: normal;
  white-space: nowrap;
  overflow: hidden;
  background-clip: padding-box;
}
.grid th { padding: 0; background: #f0f0f0; color: #444; text-align: center; border-bottom-color: #c4c4c4; }
.grid th.hot { background: #7db8f8; color: #fff; font-weight: bold; }
.grid td.no { padding: 0; background: #f0f0f0; color: #555; text-align: center; font-size: 13px; }
.grid td.no.cur { background: #7db8f8; color: #fff; font-weight: bold; }
.propwrap { flex: 1; background: linear-gradient(90deg, #f0f0f0 22px, #fff 22px); }
.prop { width: 277px; }
.pc0 { width: 22px; }
.pc1 { width: 101px; }
.pc2 { width: 113px; }
.pc3 { width: 41px; }
.link { color: #2f6fe0; }
.shade { background: #ededed; }
.cc { text-align: center; }
.chk { display: block; width: 14px; height: 14px; margin: 0 auto; border: 1px solid #8a8a8a; border-radius: 2px; background: #fff; }
.box {
  display: inline-block;
  width: 11px; height: 11px;
  margin-right: 7px;
  vertical-align: -1px;
  border: 1px solid #777;
  border-radius: 2px;
  background: linear-gradient(#333, #333) center / 5px 1px no-repeat;
}
.box.plus { background: linear-gradient(#333, #333) center / 5px 1px no-repeat, linear-gradient(#333, #333) center / 1px 5px no-repeat; }
.grid td.sub {
  padding-left: 31px;
  background:
    linear-gradient(#dcdcdc, #dcdcdc) 8px 0 / 1px 100% no-repeat,
    linear-gradient(#dcdcdc, #dcdcdc) 8px 50% / 17px 1px no-repeat;
}
.grid td.sub.last {
  background:
    linear-gradient(#dcdcdc, #dcdcdc) 8px 0 / 1px 50% no-repeat,
    linear-gradient(#dcdcdc, #dcdcdc) 8px 50% / 17px 1px no-repeat;
}
.grid td.edit { padding: 0; box-shadow: inset 0 0 0 2px #6aa8ec; }
.edit-in { display: flex; align-items: center; justify-content: space-between; height: 20px; padding: 0 4px 0 3px; overflow: hidden; }
.node .edit-in { padding: 0 6px 0 5px; }
.edit-t { overflow: hidden; white-space: nowrap; }
.dots {
  flex: none;
  width: 15px; height: 12px;
  margin-left: 2px;
  border: 1px solid #5a9ae0;
  border-radius: 2px;
  background: #d6e7fa;
  color: #3b86d8;
  font: bold 10px/9px "Liberation Sans", sans-serif;
  text-align: center;
}
.dots.pale { background: #e8f1fb; color: #9ab8d8; }
mark { background: #a9c3e8; color: #555; }

/* dialog */
.dialog {
  position: absolute;
  left: 521px; top: 237px;
  width: 961px; height: 533px;
  display: flex;
  flex-direction: column;
  background: #f0f0f0;
  border-bottom: 1px solid #c8c8c8;
  border-left: 1px solid #c8c8c8;
}
.dtitle { height: 27px; padding-left: 8px; line-height: 25px; background: #2e80e0; color: #fff; flex: none; }
.dbody { flex: 1; padding: 11px 10px 0 11px; }
.dgrid { display: flex; align-items: flex-start; height: 451px; background: #fff; border: 1px solid #c8c8c8; }
.node { width: 535px; flex: none; }
.node th { height: 20px; }
.nc0 { width: 23px; }
.nc1 { width: 310px; }
.nc2 { width: 202px; }
.ye { background: #ffffd0; }
.dis td { color: #a8a8a8; }
.grid .dis td.no { color: #555; }
.preview {
  width: 402px;
  height: 400px;
  margin: 50px 0 0 2px;
  flex: none;
  background: #f0f0f0;
  border: 1px solid #1f3c6e;
  overflow: hidden;
}
.ptitle { height: 22px; padding-left: 5px; line-height: 25px; }
.pimg { display: block; width: 392px; height: 333px; margin-left: 3px; background: #000; }
.la { fill: #00e000; font-family: "Liberation Serif", serif; font-size: 92px; letter-spacing: 9px; }
.nodename { fill: #00e0e8; font-family: "Noto Sans CJK SC", sans-serif; font-size: 106px; font-weight: 300; letter-spacing: 6px; }
.pdesc { margin: 7px 0 0 2px; line-height: 17px; white-space: nowrap; }
.dfoot { display: flex; justify-content: flex-end; gap: 6px; padding-top: 6px; }
.btn {
  width: 80px; height: 26px;
  line-height: 24px;
  text-align: center;
  background: #fff;
  border: 1px solid #d4d4d4;
  border-radius: 3px;
}
.btn.ok { background: #2e80e0; border-color: #2e80e0; color: #fff; }

.marks { position: absolute; left: 0; top: 0; width: 1430px; height: 971px; pointer-events: none; }
```
